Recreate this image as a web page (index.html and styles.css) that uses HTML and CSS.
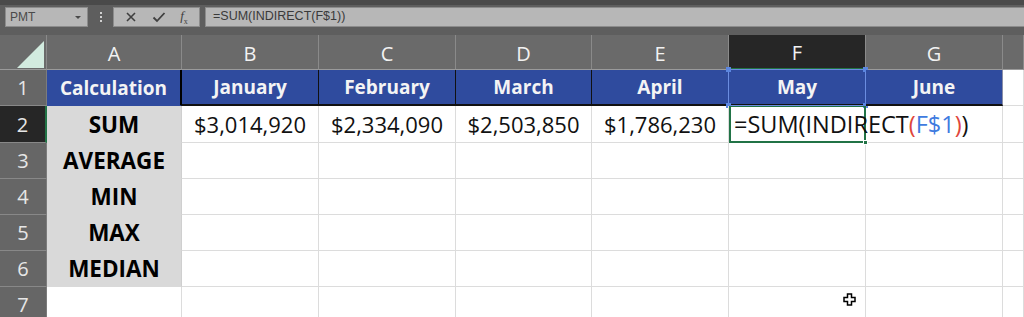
FILE: index.html
```html
<!DOCTYPE html>
<html lang="en">
<head>
  <meta charset="UTF-8" />
  <title>Budget - Excel</title>
  <link rel="stylesheet" href="styles.css">
</head>
<body>
  <!-- Formula bar -->
  <div class="formula-bar">
    <div class="name-box">
      <span>PMT</span>
      <span class="dropdown"></span>
    </div>
    <div class="grip"><i></i><i></i><i></i></div>
    <div class="fx-buttons">
      <svg width="12" height="12" viewBox="0 0 12 12"><path d="M2 2 L10 10 M10 2 L2 10" stroke="#3f3f3f" stroke-width="1.6" fill="none"/></svg>
      <svg width="14" height="12" viewBox="0 0 14 12"><path d="M1.5 6.5 L5 10 L12.5 2" stroke="#3f3f3f" stroke-width="1.8" fill="none"/></svg>
      <span class="fx"><i>f</i><sub>x</sub></span>
    </div>
    <div class="formula-input">=SUM(INDIRECT(F$1))</div>
  </div>

  <!-- Worksheet -->
  <div class="sheet">
    <div class="corner">
      <svg width="47" height="35" viewBox="0 0 47 35"><polygon points="17,33 44,33 44,6" fill="#d2ebdf"/></svg>
    </div>
    <div class="col-head">A</div>
    <div class="col-head">B</div>
    <div class="col-head">C</div>
    <div class="col-head">D</div>
    <div class="col-head">E</div>
    <div class="col-head active">F</div>
    <div class="col-head">G</div>
    <div class="col-head rest"></div>

    <div class="row-head">1</div>
    <div class="cell title first">Calculation</div>
    <div class="cell title">January</div>
    <div class="cell title">February</div>
    <div class="cell title">March</div>
    <div class="cell title">April</div>
    <div class="cell title ref">May
      <span class="ref-box"><b class="h tl"></b><b class="h tr"></b><b class="h bl"></b><b class="h br"></b></span>
    </div>
    <div class="cell title last">June</div>
    <div class="cell"></div>

    <div class="row-head active">2</div>
    <div class="cell label">SUM</div>
    <div class="cell num">$3,014,920</div>
    <div class="cell num">$2,334,090</div>
    <div class="cell num">$2,503,850</div>
    <div class="cell num">$1,786,230</div>
    <div class="cell editing">
      <span class="formula">=SUM(INDIRECT<span class="paren">(</span><span class="ref-text">F$1</span><span class="paren">)</span>)</span><span class="caret"></span>
      <b class="fill-handle"></b>
    </div>
    <div class="cell no-left"></div>
    <div class="cell"></div>

    <div class="row-head">3</div>
    <div class="cell label">AVERAGE</div>
    <div class="cell"></div><div class="cell"></div><div class="cell"></div><div class="cell"></div><div class="cell"></div><div class="cell"></div><div class="cell"></div>

    <div class="row-head">4</div>
    <div class="cell label">MIN</div>
    <div class="cell"></div><div class="cell"></div><div class="cell"></div><div class="cell"></div><div class="cell"></div><div class="cell"></div><div class="cell"></div>

    <div class="row-head">5</div>
    <div class="cell label">MAX</div>
    <div class="cell"></div><div class="cell"></div><div class="cell"></div><div class="cell"></div><div class="cell"></div><div class="cell"></div><div class="cell"></div>

    <div class="row-head">6</div>
    <div class="cell label">MEDIAN</div>
    <div class="cell"></div><div class="cell"></div><div class="cell"></div><div class="cell"></div><div class="cell"></div><div class="cell"></div><div class="cell"></div>

    <div class="row-head">7</div>
    <div class="cell"></div><div class="cell"></div><div class="cell"></div><div class="cell"></div><div class="cell"></div>
    <div class="cell pointer-cell">
      <svg class="pointer" width="13" height="13" viewBox="0 0 13 13"><path d="M4.5 1 H8.5 V4.5 H12 V8.5 H8.5 V12 H4.5 V8.5 H1 V4.5 H4.5 Z" fill="#fff" stroke="#000" stroke-width="1.5"/></svg>
    </div>
    <div class="cell"></div><div class="cell"></div>
  </div>
</body>
</html>
```

FILE: styles.css
```css
/* ---------------- Excel dark chrome + sheet ---------------- */
:root {
  --chrome: #5e5e5e;
  --chrome-dark: #4a4a4a;
  --box: #b7b7b7;
  --head: #6a6a6a;
  --head-line: #8a8a8a;
  --selected-head: #262626;
  --excel-green: #217346;
  --grid: #dcdcdc;
  --title-blue: #2f4b9e;
  --label-grey: #d9d9d9;
}

* {
  box-sizing: border-box;
}

body {
  margin: 0;
  background: #fff;
  font-family: "Open Sans", "Liberation Sans", sans-serif;
  overflow: hidden;
}

/* Formula bar */
.formula-bar {
  height: 35px;
  display: flex;
  align-items: flex-start;
  padding: 2px 0 0 5px;
  background: var(--chrome);
  border-top: 5px solid var(--chrome-dark);
}

.name-box {
  width: 83px;
  height: 20px;
  background: var(--box);
  border: 1px solid #8c8c8c;
  display: flex;
  align-items: center;
  justify-content: space-between;
  padding: 0 6px 0 4px;
  font-family: "Liberation Sans", sans-serif;
  font-size: 12px;
  color: #4a4a4a;
}

.dropdown {
  width: 0;
  height: 0;
  border-left: 3px solid transparent;
  border-right: 3px solid transparent;
  border-top: 3px solid #4a4a4a;
}

.grip {
  width: 25px;
  height: 20px;
  display: flex;
  flex-direction: column;
  align-items: center;
  justify-content: center;
  gap: 2px;
}

.grip i {
  width: 2px;
  height: 2px;
  background: #d0d0d0;
}

.fx-buttons {
  width: 87px;
  height: 20px;
  background: var(--box);
  border: 1px solid #8c8c8c;
  display: flex;
  align-items: center;
  justify-content: space-around;
  padding: 0 4px;
}

.fx {
  font-family: "Liberation Serif", serif;
  font-size: 13px;
  color: #3f3f3f;
}

.fx sub {
  font-size: 8px;
}

.formula-input {
  flex: 1;
  height: 20px;
  margin-left: 5px;
  background: var(--box);
  border: 1px solid #8c8c8c;
  border-right: none;
  padding: 1px 7px;
  font-family: "Liberation Sans", sans-serif;
  font-size: 12.5px;
  color: #3a3a3a;
}

/* Worksheet grid */
.sheet {
  display: grid;
  grid-template-columns: 47px 135px 137px 137px 136px 137px 137px 137px 1fr;
  grid-template-rows: 35px 36px 37px 36px 36px 36px 36px 36px;
}

.corner {
  background: var(--head);
  border-right: 1px solid var(--head-line);
  border-bottom: 1px solid #9a9a9a;
}

.corner svg {
  display: block;
}

.col-head {
  background: var(--head);
  border-right: 1px solid var(--head-line);
  border-bottom: 1px solid #9a9a9a;
  display: flex;
  align-items: center;
  justify-content: center;
  padding-top: 2px;
  color: #f2f2f2;
  font-size: 20px;
}

.col-head.active {
  background: var(--selected-head);
  border-bottom: 2px solid var(--excel-green);
}

.row-head {
  background: #666;
  border-bottom: 1px solid #888;
  border-right: 1px solid #7c7c7c;
  display: flex;
  align-items: center;
  justify-content: center;
  color: #e6e6e6;
  font-size: 20px;
}

.row-head.active {
  background: var(--selected-head);
  border-right: 2px solid var(--excel-green);
}

.cell {
  position: relative;
  border-right: 1px solid var(--grid);
  border-bottom: 1px solid var(--grid);
  display: flex;
  align-items: center;
  justify-content: center;
  font-size: 22px;
  color: #111;
  white-space: nowrap;
}

.cell.title {
  background: var(--title-blue);
  color: #f4f4f4;
  font-weight: 700;
  font-size: 19px;
  border-right: 1px solid #111;
  border-bottom: 2px solid #111;
}

.cell.title.first {
  border-right: 2px solid #000;
  border-bottom: 1px solid var(--title-blue);
}

.cell.title.last {
  border-right: 1px solid #8a8fa8;
}

.cell.label {
  background: var(--label-grey);
  border-bottom-color: var(--label-grey);
  border-right-color: #cfcfcf;
  font-weight: 700;
  font-size: 22.5px;
  color: #000;
}

/* F1 reference highlight */
.ref-box {
  position: absolute;
  inset: -1px -1px -2px -1px;
  border: 1px solid #6b8de0;
}

.ref-box .h {
  position: absolute;
  width: 5px;
  height: 5px;
  background: #5b86e0;
}

.h.tl { left: -3px; top: -3px; }
.h.tr { right: -3px; top: -3px; }
.h.bl { left: -3px; bottom: -3px; }
.h.br { right: -3px; bottom: -3px; }

/* F2 in edit mode */
.cell.editing {
  justify-content: flex-start;
  padding-left: 3px;
  border: 2px solid var(--excel-green);
  border-top-width: 1px;
  overflow: visible;
  z-index: 2;
  font-size: 23.5px;
}

.formula {
  color: #111;
}

.paren {
  color: #e0453a;
}

.ref-text {
  color: #3f7be0;
}

.caret {
  display: inline-block;
  width: 1px;
  height: 27px;
  margin-left: 3px;
  background: #111;
}

.fill-handle {
  position: absolute;
  right: -4px;
  bottom: -4px;
  width: 5px;
  height: 5px;
  background: var(--excel-green);
  border: 1px solid #fff;
}

.cell.no-left {
  border-left: none;
}

.pointer {
  position: absolute;
  left: 114px;
  top: 6px;
}
```
